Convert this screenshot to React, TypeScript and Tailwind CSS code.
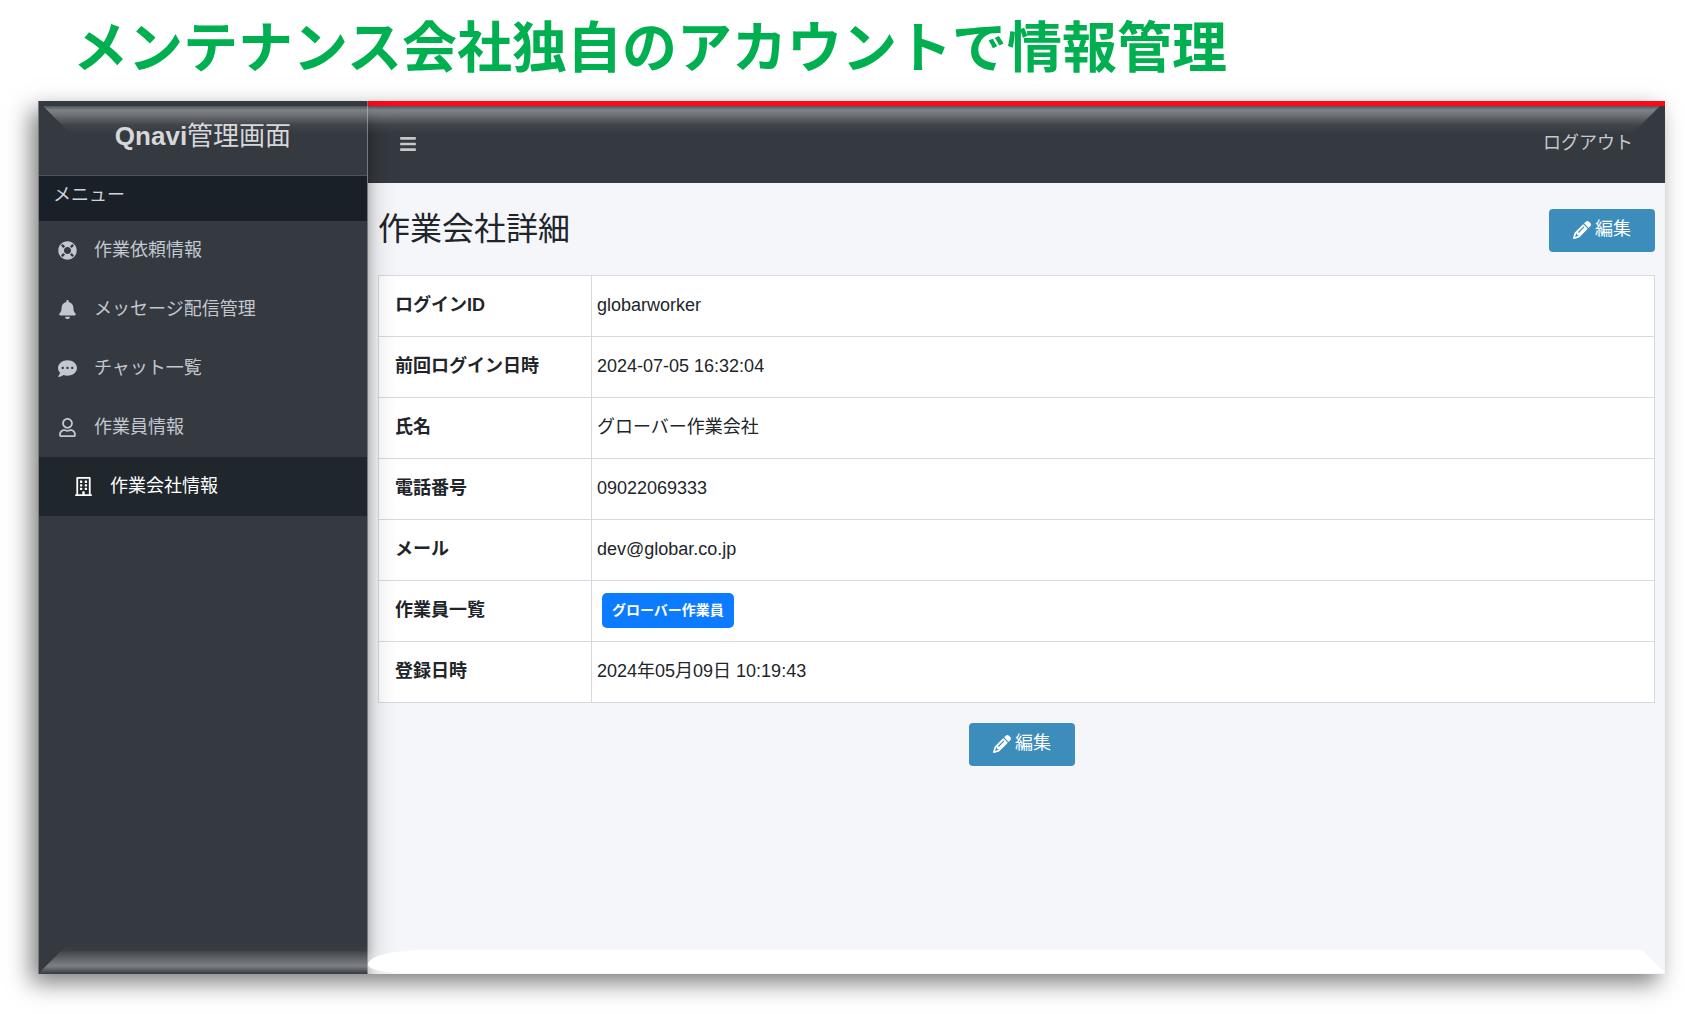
import React from "react";
import {
  FaBars,
  FaBell,
  FaCommentDots,
  FaLifeRing,
  FaRegBuilding,
  FaRegUser,
} from "react-icons/fa";
import { FaPencil } from "react-icons/fa6";

const menuItems = [
  { label: "作業依頼情報", Icon: FaLifeRing, active: false },
  { label: "メッセージ配信管理", Icon: FaBell, active: false },
  { label: "チャット一覧", Icon: FaCommentDots, active: false },
  { label: "作業員情報", Icon: FaRegUser, active: false },
  { label: "作業会社情報", Icon: FaRegBuilding, active: true },
];

const rows: { label: string; value: React.ReactNode }[] = [
  { label: "ログインID", value: "globarworker" },
  { label: "前回ログイン日時", value: "2024-07-05 16:32:04" },
  { label: "氏名", value: "グローバー作業会社" },
  { label: "電話番号", value: "09022069333" },
  { label: "メール", value: "dev@globar.co.jp" },
  {
    label: "作業員一覧",
    value: (
      <a
        href="#worker"
        className="ml-[5px] inline-flex h-[35px] items-center rounded-[5px] bg-[#0d7bff] px-[10px] text-[14px] font-bold text-white"
      >
        グローバー作業員
      </a>
    ),
  },
  { label: "登録日時", value: "2024年05月09日 10:19:43" },
];

function EditButton() {
  return (
    <button
      type="button"
      className="flex h-[43px] w-[106px] shrink-0 items-center justify-center gap-1 rounded-[4px] bg-[#3c8dbc] pb-[2px] text-[18px] text-white"
    >
      <FaPencil className="size-[18px]" />
      編集
    </button>
  );
}

function Sidebar() {
  return (
    <aside className="relative z-10 flex w-[330px] shrink-0 flex-col border-x border-[#777b80] bg-[#353940] shadow-[0_14px_28px_rgba(0,0,0,0.25),0_10px_10px_rgba(0,0,0,0.22)]">
      <a
        href="#home"
        className="flex h-[75px] items-center justify-center border-b border-[#4b545c] pb-[4px] text-[26px] text-[#d6d7d9]"
      >
        <b>Qnavi</b>管理画面
      </a>
      <div className="h-[45px] bg-[#1a2027] px-[14px] pt-[5px] text-[18px] leading-[28px] text-[#d0d4db]">
        メニュー
      </div>
      <nav>
        <ul>
          {menuItems.map(({ label, Icon, active }) => (
            <li key={label}>
              <a
                href="#menu"
                aria-current={active ? "page" : undefined}
                className={
                  active
                    ? "flex h-[59px] items-center gap-[17px] bg-[#1f262c] pb-px pl-[35px] text-[18px] text-white"
                    : "flex h-[59px] items-center gap-[17px] pb-px pl-[19px] text-[18px] text-[#c2c7d0]"
                }
              >
                <Icon className="size-[19px]" />
                {label}
              </a>
            </li>
          ))}
        </ul>
      </nav>
    </aside>
  );
}

export default function App() {
  return (
    <div className="flex min-h-screen flex-col bg-white pr-[20px] pb-[40px] pl-[38px] font-['Liberation_Sans','Noto_Sans_CJK_JP',sans-serif] text-[#212529]">
      <h1 className="flex h-[101px] shrink-0 items-center pb-[5px] pl-[35px] text-[55px] font-bold whitespace-nowrap text-[#00b050]">
        メンテナンス会社独自のアカウントで情報管理
      </h1>
      <div className="relative flex flex-1 overflow-hidden bg-[#f4f6fa] shadow-[-7px_9px_22px_rgba(0,0,0,0.5)]">
        <Sidebar />
        <div className="flex min-w-0 flex-1 flex-col">
          <header className="flex h-[82px] shrink-0 items-center justify-between border-t-[5px] border-[#fb0a18] bg-[#353940] pr-[32px] pb-[2px] pl-[31px] text-[18px] text-[#c7c8ca]">
            <button type="button" aria-label="メニュー切替">
              <FaBars className="size-[18px]" />
            </button>
            <a href="#logout">ログアウト</a>
          </header>
          <main className="flex flex-1 flex-col pt-[26px] pr-[10px] pl-[10px]">
            <div className="flex items-start justify-between">
              <h2 className="text-[32px] leading-[40px]">作業会社詳細</h2>
              <EditButton />
            </div>
            <table className="mt-[23px] w-full table-fixed border-collapse bg-white text-[18px]">
              <colgroup>
                <col className="w-[213px]" />
                <col />
              </colgroup>
              <tbody>
                {rows.map(({ label, value }) => (
                  <tr key={label} className="h-[61px]">
                    <th
                      scope="row"
                      className="border border-[#d6d9e2] pt-0 pb-px pl-4 text-left font-bold"
                    >
                      {label}
                    </th>
                    <td className="border border-[#d6d9e2] pt-0 pb-px pl-[5px]">{value}</td>
                  </tr>
                ))}
              </tbody>
            </table>
            <div className="mt-5 flex justify-center pl-[11px]">
              <EditButton />
            </div>
          </main>
        </div>

        {/* Bevelled highlights along the top and bottom edges of the frame */}
        <div className="pointer-events-none absolute inset-x-0 top-[5px] z-20 h-[28px] bg-[linear-gradient(to_bottom,rgba(255,255,255,0.14),rgba(255,255,255,0.36)_4px,rgba(255,255,255,0.3)_8px,rgba(255,255,255,0.06)_19px,rgba(255,255,255,0))] [clip-path:polygon(5px_0,calc(100%_-_5px)_0,calc(100%_-_33px)_100%,33px_100%)]" />
        <div className="pointer-events-none absolute right-0 bottom-px left-[330px] z-10 h-[23px] rounded-tl-[60px_14px] rounded-bl-[40px_8px] bg-white [clip-path:polygon(0_0,calc(100%_-_23px)_0,100%_100%,0_100%)]" />
        <div className="pointer-events-none absolute inset-x-0 bottom-0 z-20 h-[34px] bg-[linear-gradient(to_top,rgba(255,255,255,0),rgba(255,255,255,0.36)_8px,rgba(255,255,255,0.1)_21px,rgba(255,255,255,0.02)_24px,rgba(255,255,255,0))] [clip-path:polygon(34px_0,calc(100%_-_34px)_0,100%_100%,0_100%)]" />
      </div>
    </div>
  );
}
